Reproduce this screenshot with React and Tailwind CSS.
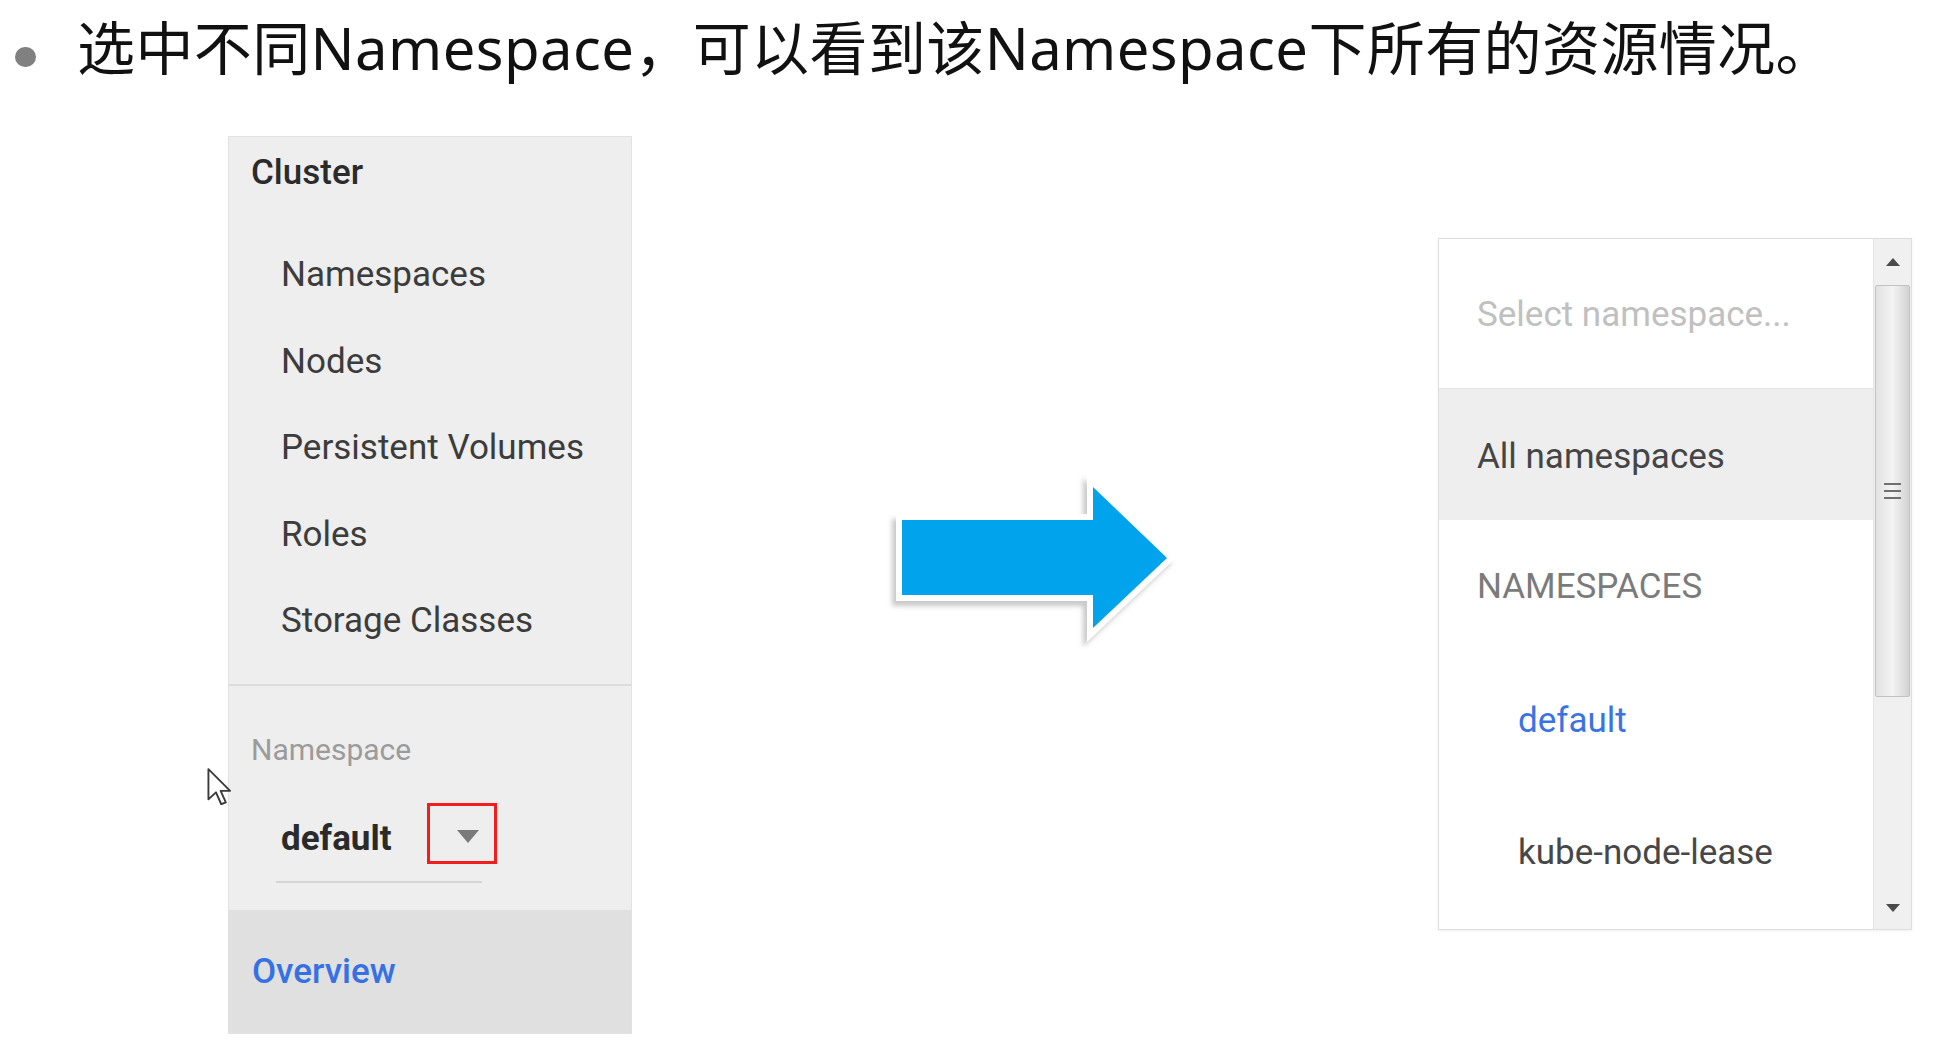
import React from 'react';

const navItems = ['Namespaces', 'Nodes', 'Persistent Volumes', 'Roles', 'Storage Classes'];

const arrowPts = '17,45 208,45 208,12 282,83 208,153 208,120 17,120';

const Arrow = () => (
  <svg width="320" height="190" viewBox="-10 -10 320 190" className="ml-[243px] mt-[329px] shrink-0">
    <defs>
      <filter id="arrowShadow" x="-20%" y="-20%" width="140%" height="140%">
        <feGaussianBlur stdDeviation="2.5" />
      </filter>
    </defs>
    <polygon
      points={arrowPts}
      transform="translate(-4,5)"
      fill="#c9c9c9"
      stroke="#c9c9c9"
      strokeWidth="12"
      strokeLinejoin="miter"
      filter="url(#arrowShadow)"
    />
    <polygon points={arrowPts} fill="#ffffff" stroke="#ffffff" strokeWidth="12" strokeLinejoin="miter" />
    <polygon points={arrowPts} fill="#02a3ed" />
  </svg>
);

const Cursor = () => (
  <svg
    width="24"
    height="37"
    viewBox="-0.6 -0.6 12.4 19.6"
    className="absolute left-[207px] top-[768px]"
  >
    <path
      d="M0 0 L0 16 L4 12.3 L6.8 18.6 L9.2 17.6 L6.5 11.5 L11.5 11.5 Z"
      fill="#ffffff"
      stroke="#3a3a3a"
      strokeWidth="1"
      strokeLinejoin="round"
    />
  </svg>
);

const Sidebar = () => (
  <div className="w-[404px] shrink-0 border border-[#e2e2e2] bg-[#eeeeee] font-['Roboto',sans-serif]">
    {/* Cluster */}
    <div className="border-b-2 border-[#dcdcdc] pb-[19px]">
      <div className="pl-[22px] pt-[15px] text-[35px] leading-[41px] font-medium text-[#2b2b2b]">Cluster</div>
      <div className="mt-[39px]">
        {navItems.map((item) => (
          <div key={item} className="h-[86.5px] pl-[52px] pt-[22px] text-[35px] leading-[41px] text-[#3c3c3c]">
            {item}
          </div>
        ))}
      </div>
    </div>

    {/* Namespace select */}
    <div className="pt-[46px] pb-[27px]">
      <div className="pl-[22px] text-[30px] leading-[35px] text-[#9b9b9b]">Namespace</div>
      <div className="relative ml-[47px] mt-[51px] flex h-[65px] w-[206px] items-start border-b-2 border-[#d4d4d4]">
        <span className="pl-[5px] text-[35px] leading-[41px] font-bold text-[#2a2a2a]">default</span>
        <svg width="22" height="13" viewBox="0 0 22 13" className="ml-[65px] mt-[12px]">
          <polygon points="0,0 22,0 11,13" fill="#7a7a7a" />
        </svg>
        <div className="absolute left-[151px] top-[-15px] h-[61px] w-[70px] border-[3px] border-[#f21d1d]" />
      </div>
    </div>

    {/* Overview */}
    <div className="h-[123px] bg-[#e0e0e0] pl-[23px] pt-[41px] text-[35px] leading-[41px] font-medium text-[#3571e4]">
      Overview
    </div>
  </div>
);

const ScrollArrow = ({ up }) => (
  <svg width="14" height="8" viewBox="0 0 14 8">
    <polygon points={up ? '0,8 14,8 7,0' : '0,0 14,0 7,8'} fill="#4a4a4a" />
  </svg>
);

const NamespacePicker = () => (
  <div className="ml-[243px] mt-[102px] flex h-[692px] w-[474px] shrink-0 overflow-hidden border border-[#dedede] bg-white font-['Roboto',sans-serif] shadow-[0_1px_3px_rgba(0,0,0,0.06)]">
    <div className="flex-1 overflow-hidden">
      <div className="h-[149px] pl-[38px] pt-[55px] text-[35px] leading-[41px] text-[#c0c0c0]">
        Select namespace...
      </div>
      <div className="h-[132px] border-t border-[#e4e4e4] bg-[#eeeeee] pl-[38px] pt-[47px] text-[35px] leading-[41px] text-[#454545]">
        All namespaces
      </div>
      <div className="h-[132px] pl-[38px] pt-[46px] text-[35px] leading-[41px] text-[#7b7b7b]">NAMESPACES</div>
      <div className="h-[132px] pl-[79px] pt-[48px] text-[35px] leading-[41px] text-[#3b73e3]">default</div>
      <div className="h-[132px] pl-[79px] pt-[48px] text-[35px] leading-[41px] text-[#474747]">kube-node-lease</div>
    </div>

    {/* scrollbar */}
    <div className="flex w-[38px] flex-col border-l border-[#e4e4e4] bg-[#f0f0f0]">
      <div className="flex h-[46px] items-center justify-center">
        <ScrollArrow up />
      </div>
      <div className="ml-[1px] mr-[1px] flex h-[412px] items-center justify-center rounded-[2px] border border-[#c2c2c2] bg-gradient-to-r from-[#e2e2e2] via-[#f4f4f4] to-[#d2d2d2]">
        <div className="flex flex-col gap-[5px]">
          <div className="h-[2px] w-[17px] bg-[#707070]" />
          <div className="h-[2px] w-[17px] bg-[#707070]" />
          <div className="h-[2px] w-[17px] bg-[#707070]" />
        </div>
      </div>
      <div className="flex-1" />
      <div className="flex h-[42px] items-center justify-center">
        <ScrollArrow />
      </div>
    </div>
  </div>
);

export default function App() {
  return (
    <div className="relative h-[1046px] w-[1935px] overflow-hidden bg-white">
      {/* Title */}
      <div className="flex items-start pl-[15px] pt-[19px]">
        <span className="mt-[28px] h-[20px] w-[21px] shrink-0 rounded-full bg-[#808080]" />
        <p className="ml-[41px] whitespace-nowrap font-['Noto_Sans','Noto_Sans_CJK_SC',sans-serif] text-[58px] leading-[58px] tracking-[0.4px] text-[#111111]">
          选中不同Namespace，可以看到该Namespace下所有的资源情况。
        </p>
      </div>

      {/* Content */}
      <div className="mt-[59px] flex items-start pl-[228px]">
        <Sidebar />
        <Arrow />
        <NamespacePicker />
      </div>

      <Cursor />
    </div>
  );
}
